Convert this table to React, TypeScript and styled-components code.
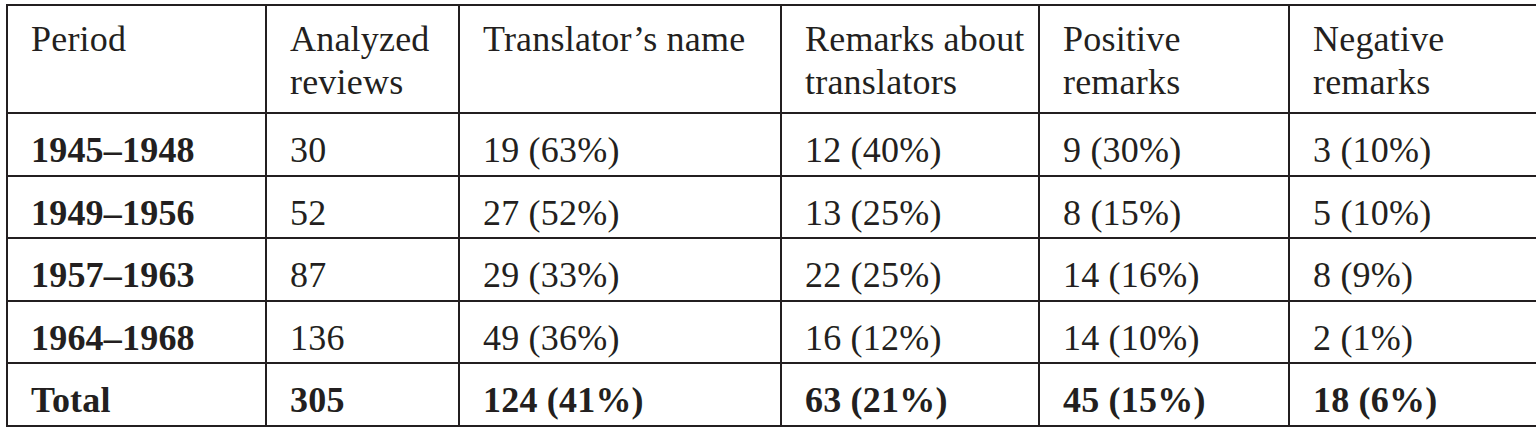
import React, { FC } from "react";
import styled, { createGlobalStyle } from "styled-components";

const GlobalStyle = createGlobalStyle`
  html, body {
    margin: 0;
    padding: 0;
    background: #ffffff;
    overflow: hidden;
  }
`;

const Page = styled.div`
  width: 1536px;
  height: 436px;
  padding: 4px 0 0 6px;
  box-sizing: border-box;
  overflow: hidden;
`;

const Table = styled.table`
  border-collapse: collapse;
  table-layout: fixed;
  width: 1560px;
  font-family: "Liberation Serif", "Times New Roman", serif;
  font-size: 36px;
  line-height: 43px;
  letter-spacing: 0.2px;
  color: #231f20;
`;

const Row = styled.tr<{ $h: number }>`
  height: ${(p) => p.$h}px;
`;

const Cell = styled.td<{ $bold?: boolean }>`
  border: 2px solid #231f20;
  padding: 15px 6px 2px 23px;
  vertical-align: top;
  text-align: left;
  font-weight: ${(p) => (p.$bold ? 700 : 400)};
  white-space: nowrap;
`;

const HeadCell = styled.th`
  border: 2px solid #231f20;
  padding: 12px 6px 4px 23px;
  vertical-align: top;
  text-align: left;
  font-weight: 400;
  white-space: nowrap;
`;

const widths = [259, 193, 322, 258, 250, 292];

const headers = [
  ["Period"],
  ["Analyzed", "reviews"],
  ["Translator\u2019s name"],
  ["Remarks about", "translators"],
  ["Positive", "remarks"],
  ["Negative", "remarks"],
];

const rows: string[][] = [
  ["1945\u20131948", "30", "19 (63%)", "12 (40%)", "9 (30%)", "3 (10%)"],
  ["1949\u20131956", "52", "27 (52%)", "13 (25%)", "8 (15%)", "5 (10%)"],
  ["1957\u20131963", "87", "29 (33%)", "22 (25%)", "14 (16%)", "8 (9%)"],
  ["1964\u20131968", "136", "49 (36%)", "16 (12%)", "14 (10%)", "2 (1%)"],
];

const total = ["Total", "305", "124 (41%)", "63 (21%)", "45 (15%)", "18 (6%)"];

const rowHeights = [63, 62, 63, 62];

const App: FC = () => (
  <>
    <GlobalStyle />
    <Page>
      <Table>
        <colgroup>
          {widths.map((w, i) => (
            <col key={i} style={{ width: w }} />
          ))}
        </colgroup>
        <thead>
          <Row $h={108}>
            {headers.map((lines, i) => (
              <HeadCell key={i}>
                {lines.map((l, j) => (
                  <React.Fragment key={j}>
                    {j > 0 && <br />}
                    {l}
                  </React.Fragment>
                ))}
              </HeadCell>
            ))}
          </Row>
        </thead>
        <tbody>
          {rows.map((r, i) => (
            <Row key={i} $h={rowHeights[i]}>
              {r.map((c, j) => (
                <Cell key={j} $bold={j === 0}>
                  {c}
                </Cell>
              ))}
            </Row>
          ))}
          <Row $h={63}>
            {total.map((c, j) => (
              <Cell key={j} $bold>
                {c}
              </Cell>
            ))}
          </Row>
        </tbody>
      </Table>
    </Page>
  </>
);

export default App;
